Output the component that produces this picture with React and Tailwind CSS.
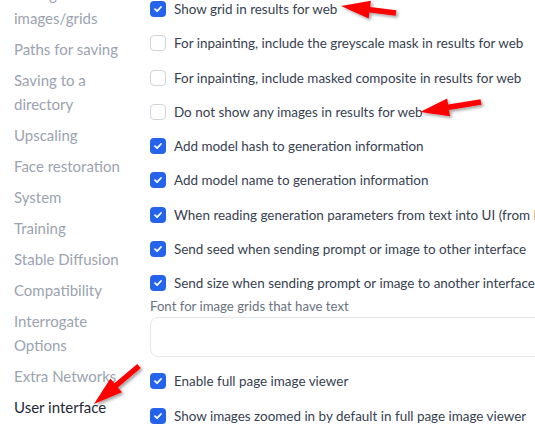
import React from 'react';

const sideItems = [
  { label: 'Saving images/grids' },
  { label: 'Paths for saving' },
  { label: 'Saving to a directory' },
  { label: 'Upscaling' },
  { label: 'Face restoration' },
  { label: 'System' },
  { label: 'Training' },
  { label: 'Stable Diffusion' },
  { label: 'Compatibility' },
  { label: 'Interrogate Options' },
  { label: 'Extra Networks' },
  { label: 'User interface', active: true }
];

const topOptions = [
  { label: 'Show grid in results for web', checked: true },
  { label: 'For inpainting, include the greyscale mask in results for web', checked: false },
  { label: 'For inpainting, include masked composite in results for web', checked: false },
  { label: 'Do not show any images in results for web', checked: false },
  { label: 'Add model hash to generation information', checked: true },
  { label: 'Add model name to generation information', checked: true },
  { label: 'When reading generation parameters from text into UI (from PNG info or pasted text), do not change the selected model/checkpoint.', checked: true },
  { label: 'Send seed when sending prompt or image to other interface', checked: true },
  { label: 'Send size when sending prompt or image to another interface', checked: true }
];

const bottomOptions = [
  { label: 'Enable full page image viewer', checked: true },
  { label: 'Show images zoomed in by default in full page image viewer', checked: true }
];

const Checkbox = ({ checked }) =>
  checked ? (
    <span className="w-4 h-4 shrink-0 rounded-[4px] bg-[#2563eb] flex items-center justify-center">
      <svg width="10" height="10" viewBox="0 0 10 10" fill="none">
        <path d="M2 5.2 L4.1 7.2 L8 3" stroke="white" strokeWidth="1.8" strokeLinecap="round" strokeLinejoin="round" />
      </svg>
    </span>
  ) : (
    <span className="w-4 h-4 shrink-0 rounded-[4px] border border-[#d1d5db] bg-white" />
  );

const OptionRow = ({ label, checked }) => (
  <label className="h-[34.25px] flex items-center gap-2 whitespace-nowrap">
    <Checkbox checked={checked} />
    <span className="text-[13.45px] text-[#374151]">{label}</span>
  </label>
);

const arrowPoints = (tip, tail, w = 5.5, L = 29, h = 9) => {
  const dx = tip[0] - tail[0];
  const dy = tip[1] - tail[1];
  const len = Math.hypot(dx, dy);
  const ux = dx / len;
  const uy = dy / len;
  const nx = -uy;
  const ny = ux;
  const bx = tip[0] - ux * L;
  const by = tip[1] - uy * L;
  const pts = [
    [tail[0] + nx * w / 2, tail[1] + ny * w / 2],
    [bx + nx * w / 2, by + ny * w / 2],
    [bx + nx * h, by + ny * h],
    tip,
    [bx - nx * h, by - ny * h],
    [bx - nx * w / 2, by - ny * w / 2],
    [tail[0] - nx * w / 2, tail[1] - ny * w / 2]
  ];
  return pts.map((p) => p.join(',')).join(' ');
};

const arrows = [
  { tip: [341, 6], tail: [396, 13] },
  { tip: [420, 112], tail: [481, 102] },
  { tip: [94, 404], tail: [139, 366] }
];

export default function App() {
  return (
    <div className="relative w-[535px] h-[429px] overflow-hidden bg-white" style={{ fontFamily: 'Lato, "Noto Sans", sans-serif' }}>
      <div className="flex">
        <nav className="w-[150px] shrink-0 pl-[14px] pr-[14px] mt-[-18px]">
          {sideItems.map((item) => (
            <div
              key={item.label}
              className={`pb-[7px] text-[15px] leading-6 ${item.active ? 'text-[#1f2937]' : 'text-[#9ca3af]'}`}
            >
              {item.label}
            </div>
          ))}
        </nav>
        <main className="flex-1 min-w-0 mt-[-8px]">
          {topOptions.map((o) => (
            <OptionRow key={o.label} {...o} />
          ))}
          <div className="mt-[-2px]">
            <div className="text-[13.2px] leading-4 text-[#6b7280] whitespace-nowrap">Font for image grids that have text</div>
            <div className="mt-[3px] h-[40px] w-[420px] rounded-lg border border-[#e5e7eb] bg-white" />
          </div>
          <div className="mt-[7px]">
            {bottomOptions.map((o) => (
              <OptionRow key={o.label} {...o} />
            ))}
          </div>
        </main>
      </div>

      <svg className="absolute inset-0 pointer-events-none" width="535" height="429">
        <defs>
          <filter id="sh" x="-20%" y="-20%" width="140%" height="140%">
            <feDropShadow dx="2" dy="2" stdDeviation="1.5" floodColor="#000" floodOpacity="0.35" />
          </filter>
        </defs>
        {arrows.map((a, i) => (
          <polygon key={i} points={arrowPoints(a.tip, a.tail)} fill="#ff0000" filter="url(#sh)" />
        ))}
      </svg>
    </div>
  );
}
